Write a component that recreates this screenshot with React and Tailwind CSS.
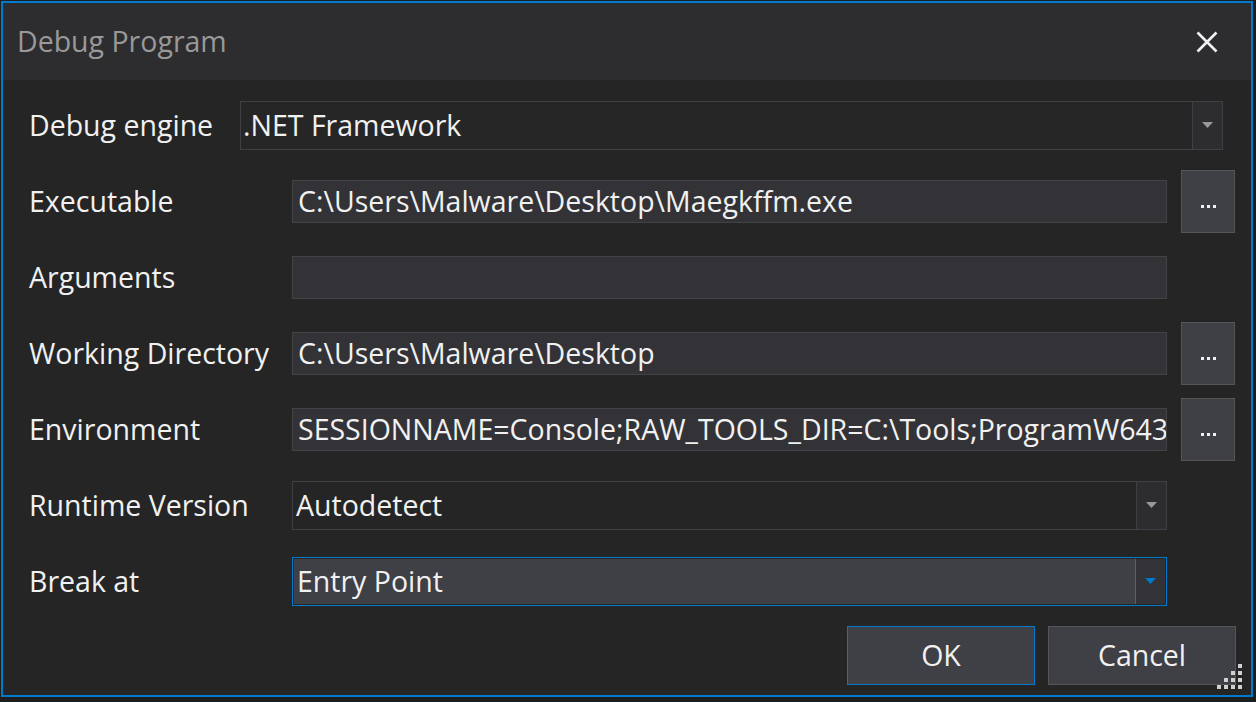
const font = { fontFamily: '"Open Sans", "Noto Sans", sans-serif' };

const Arrow = ({ color = '#999999' }) => (
    <svg width="11" height="6" viewBox="0 0 11 6">
        <path d="M0 0 L11 0 L5.5 6 Z" fill={color} />
    </svg>
);

const Dots = () => (
    <span className="flex gap-[3px] items-end h-[4px] mt-[10px]">
        <span className="w-[3px] h-[3px] bg-[#f1f1f1]" />
        <span className="w-[3px] h-[3px] bg-[#f1f1f1]" />
        <span className="w-[3px] h-[3px] bg-[#f1f1f1]" />
    </span>
);

const BrowseButton = () => (
    <div className="ml-[14px] w-[54px] h-[63px] flex items-center justify-center bg-[#3f3f46] border border-[#555555]">
        <Dots />
    </div>
);

const TextBox = ({ value }) => (
    <div className="w-[875px] h-[43px] flex items-center px-[5px] bg-[#333337] border border-[#434346] overflow-hidden whitespace-nowrap">
        {value}
    </div>
);

const Row = ({ label, labelWidth = 'w-[263px]', children }) => (
    <div className="h-[76px] flex items-center">
        <div className={`${labelWidth} shrink-0`}>{label}</div>
        {children}
    </div>
);

const Grip = () => (
    <svg width="30" height="30" viewBox="0 0 30 30" className="absolute right-[6px] bottom-[3px]">
        {[[3, 0], [2, 1], [3, 1], [1, 2], [2, 2], [3, 2], [0, 3], [1, 3], [2, 3], [3, 3]].map(([c, r]) => (
            <rect key={`${c}-${r}`} x={c * 7 + 2} y={r * 7 + 2} width="4" height="4" fill="#d0d0d0" />
        ))}
    </svg>
);

export default function App() {
    return (
        <div className="w-[1256px] h-[702px] bg-[#1e1e1e] pt-[1px] pl-[1px] overflow-hidden" style={font}>
            <div className="relative w-[1252px] h-[696px] border-2 border-[#007acc] bg-[#252526] text-[#f1f1f1] text-[28.5px] flex flex-col">
                <div className="h-[77px] bg-[#2d2d30] flex items-center justify-between pl-[14px] pr-[33px] shrink-0">
                    <span className="text-[#999999] text-[28.5px]">Debug Program</span>
                    <svg width="22" height="22" viewBox="0 0 22 22">
                        <path d="M1.5 1.5 L20.5 20.5 M20.5 1.5 L1.5 20.5" stroke="#f1f1f1" strokeWidth="2.6" />
                    </svg>
                </div>
                <div className="pl-[26px] pt-[7px] flex flex-col">
                    <Row label="Debug engine" labelWidth="w-[211px]">
                        <div className="w-[983px] h-[49px] flex bg-[#262626] border border-[#3f3f46]">
                            <div className="flex-1 flex items-center px-[2px]">.NET Framework</div>
                            <div className="w-[30px] flex items-center justify-center bg-[#2d2d30] border-l border-[#3f3f46]">
                                <Arrow />
                            </div>
                        </div>
                    </Row>
                    <Row label="Executable">
                        <TextBox value="C:\Users\Malware\Desktop\Maegkffm.exe" />
                        <BrowseButton />
                    </Row>
                    <Row label="Arguments">
                        <TextBox value="" />
                    </Row>
                    <Row label="Working Directory">
                        <TextBox value="C:\Users\Malware\Desktop" />
                        <BrowseButton />
                    </Row>
                    <Row label="Environment">
                        <TextBox value="SESSIONNAME=Console;RAW_TOOLS_DIR=C:\Tools;ProgramW6432=C:\Program Files" />
                        <BrowseButton />
                    </Row>
                    <Row label="Runtime Version">
                        <div className="w-[875px] h-[49px] flex border border-[#3f3f46]">
                            <div className="flex-1 flex items-center px-[3px]">Autodetect</div>
                            <div className="w-[30px] flex items-center justify-center bg-[#2d2d30] border-l border-[#3f3f46]">
                                <Arrow />
                            </div>
                        </div>
                    </Row>
                    <Row label="Break at">
                        <div className="w-[875px] h-[49px] flex border border-[#007acc] p-[1px]">
                            <div className="flex-1 flex items-center px-[3px] bg-[#3f3f46]">Entry Point</div>
                            <div className="w-[30px] flex items-center justify-center bg-[#333337] border-l border-[#007acc]">
                                <Arrow color="#007acc" />
                            </div>
                        </div>
                    </Row>
                    <div className="flex justify-end gap-[13px] pr-[15px] mt-[7px]">
                        <button className="w-[188px] h-[59px] bg-[#3f3f46] border border-[#007acc] text-[28.5px]">OK</button>
                        <button className="w-[188px] h-[59px] bg-[#3f3f46] border border-[#555555] text-[28.5px]">Cancel</button>
                    </div>
                </div>
                <Grip />
            </div>
        </div>
    );
}
